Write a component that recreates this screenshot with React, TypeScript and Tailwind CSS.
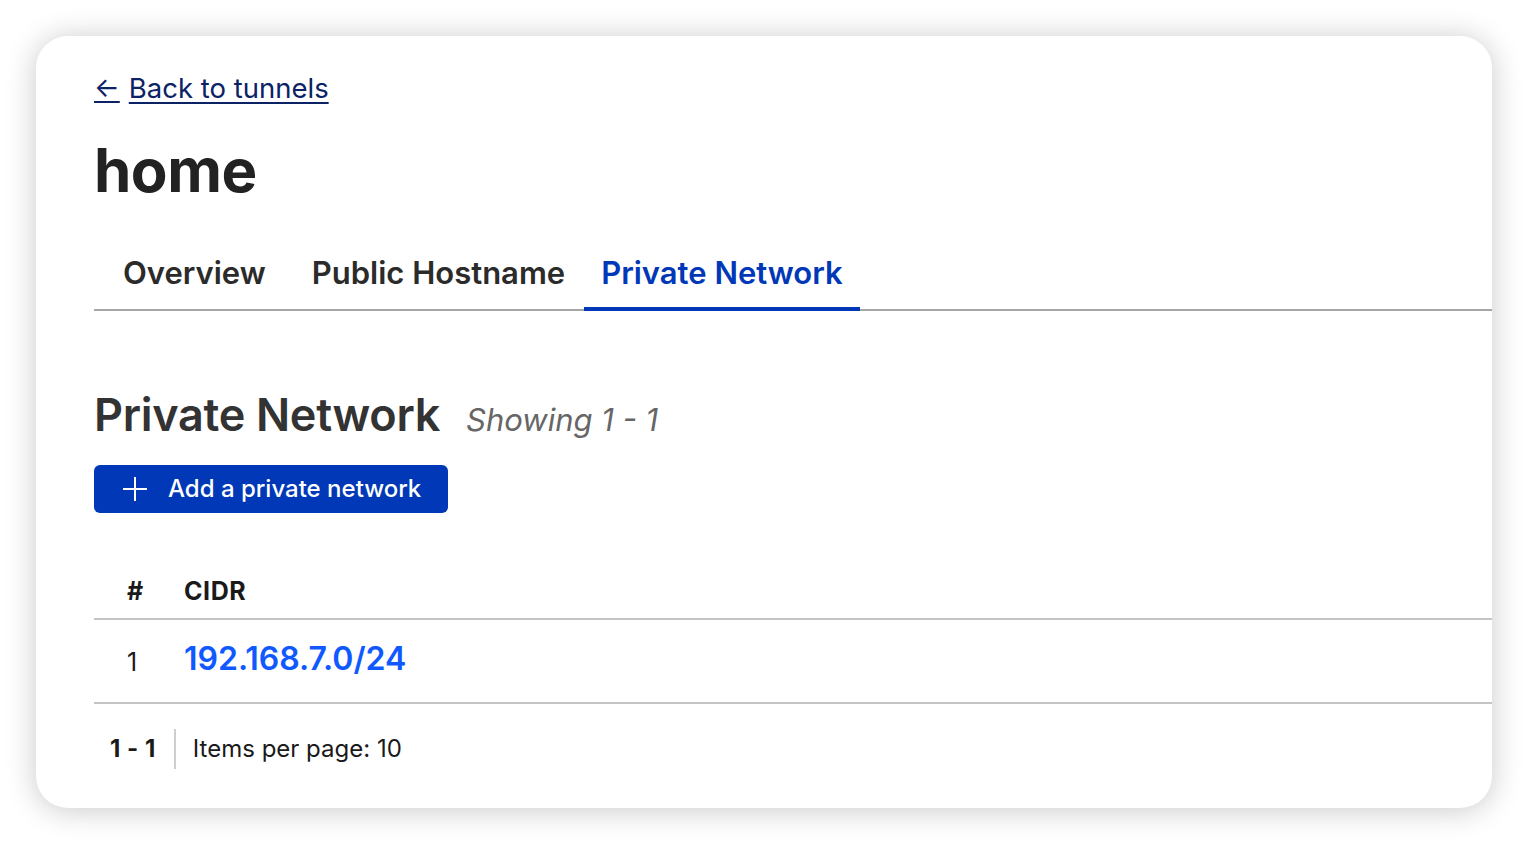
const font = { fontFamily: "Inter, 'Noto Sans', sans-serif" };

function PlusIcon() {
  return (
    <svg width="26" height="26" viewBox="0 0 26 26" fill="none" stroke="currentColor" strokeWidth="2" strokeLinecap="butt">
      <path d="M13 1v24M1 13h24" />
    </svg>
  );
}

function Tab({ label, active = false, className = "" }: { label: string; active?: boolean; className?: string }) {
  return (
    <div
      className={
        active
          ? `-mb-[2px] border-b-4 border-[#0038b8] px-[17px] pb-[10px] text-[31px] font-semibold text-[#0038b8] ${className}`
          : `px-[17px] pb-[12px] text-[31px] font-semibold text-[#2b2b2b] ${className}`
      }
    >
      {label}
    </div>
  );
}

export default function App() {
  return (
    <div className="min-h-screen bg-white p-[36px]" style={font}>
      <div className="h-[772px] overflow-hidden rounded-[32px] bg-white pl-[58px] shadow-[0_2px_30px_rgba(0,0,0,0.22)]">
        <div className="pt-[34px]">
          <a href="#" className="inline-flex items-center gap-[9px] text-[27.5px] leading-[36px] text-[#0b2265] underline decoration-[2px] underline-offset-[4px]">
            <span className="text-[27px]">←</span>
            <span>Back to tunnels</span>
          </a>
        </div>

        <h1 className="mt-[28px] text-[60px] font-bold leading-[72px] tracking-[-0.5px] text-[#222]">home</h1>

        <div className="mt-[44px] flex items-end border-b-2 border-[#a6a6a6] pl-[12px]">
          <Tab label="Overview" />
          <Tab label="Public Hostname" className="ml-[12px]" />
          <Tab label="Private Network" active className="ml-[2px]" />
        </div>

        <div className="mt-[76px] flex items-baseline gap-[26px]">
          <h2 className="text-[45px] font-semibold leading-[56px] tracking-[-0.3px] text-[#333]">Private Network</h2>
          <span className="text-[31px] italic text-[#666]">Showing 1 - 1</span>
        </div>

        <button className="mt-[22px] flex h-[48px] items-center gap-[20px] rounded-[6px] bg-[#0038b8] pl-[28px] pr-[27px] text-[24px] font-medium text-white">
          <PlusIcon />
          <span>Add a private network</span>
        </button>

        <table className="mt-[63px] w-full border-collapse">
          <thead>
            <tr className="border-b-2 border-[#c4c4c4]">
              <th className="w-[82px] pb-[12px] text-center text-[25px] font-bold leading-[30px] text-[#1a1a1a]">#</th>
              <th className="pb-[12px] pl-[8px] text-left text-[25px] font-bold leading-[30px] tracking-[0.6px] text-[#1a1a1a]">CIDR</th>
            </tr>
          </thead>
          <tbody>
            <tr className="border-b-2 border-[#c4c4c4]">
              <td className="h-[84px] pt-[4px] text-center text-[25px] text-[#1a1a1a]">
                <span className="relative -left-[3px]">1</span>
              </td>
              <td className="pl-[8px] text-[32px] font-semibold text-[#1059ff]">
                <span className="relative -top-[2px]">192.168.7.0/24</span>
              </td>
            </tr>
          </tbody>
        </table>

        <div className="mt-[25px] flex items-center text-[24px] text-[#1a1a1a]">
          <span className="pl-[16px] pr-[18px] font-bold tracking-[0.5px]">1&nbsp;-&nbsp;1</span>
          <span className="h-[40px] w-[2px] bg-[#cfcfcf]" />
          <span className="pl-[17px]">Items per page: 10</span>
        </div>
      </div>
    </div>
  );
}
